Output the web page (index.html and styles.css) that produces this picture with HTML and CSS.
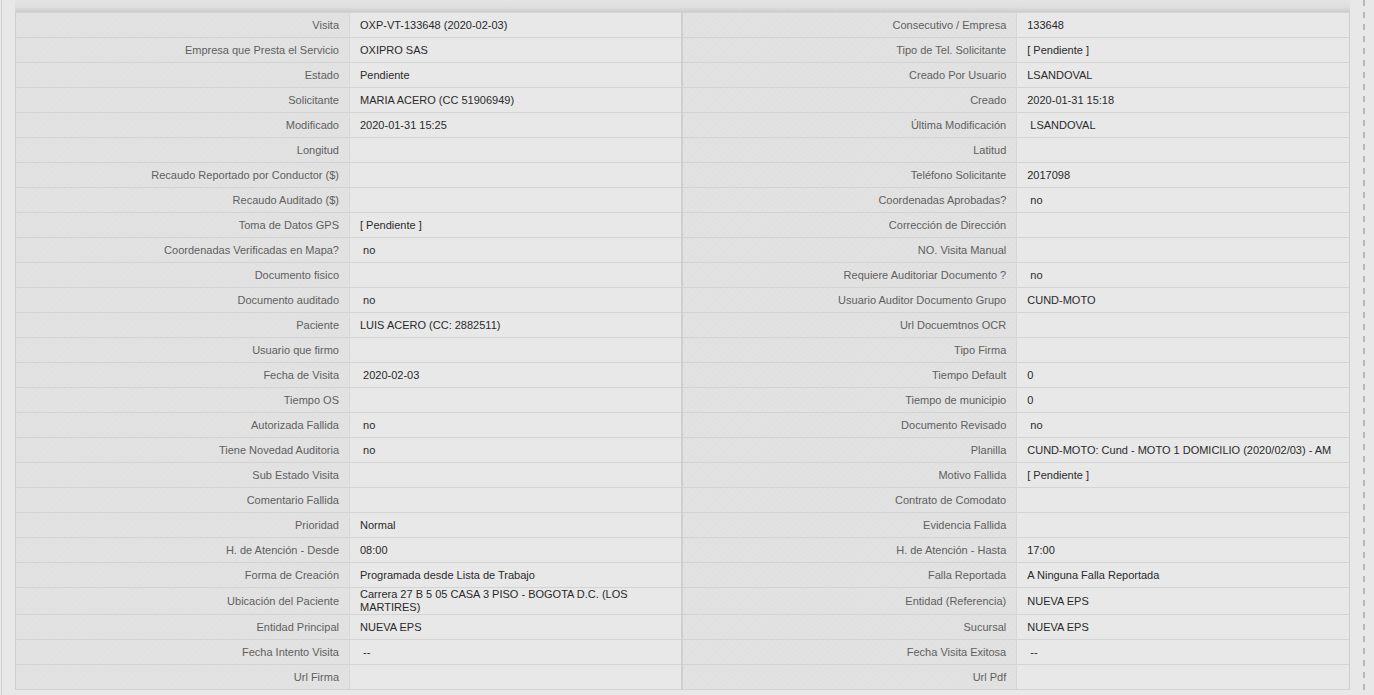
FILE: index.html
```html
<!DOCTYPE html>
<html lang="es">
<head>
    <meta charset="UTF-8">
    <title>Detalle de Visita</title>
    <link rel="stylesheet" href="styles.css">
</head>
<body>

<div class="page">
    <div class="side-line"></div>

    <div class="panel">
        <div class="panel-header"></div>
        <table class="detail-table">
            <tr><td class="lbl">Visita</td><td class="val">OXP-VT-133648 (2020-02-03)</td><td class="lbl lbl-right">Consecutivo / Empresa</td><td class="val">133648</td></tr>
            <tr><td class="lbl">Empresa que Presta el Servicio</td><td class="val">OXIPRO SAS</td><td class="lbl lbl-right">Tipo de Tel. Solicitante</td><td class="val">[ Pendiente ]</td></tr>
            <tr><td class="lbl">Estado</td><td class="val">Pendiente</td><td class="lbl lbl-right">Creado Por Usuario</td><td class="val">LSANDOVAL</td></tr>
            <tr><td class="lbl">Solicitante</td><td class="val">MARIA ACERO (CC 51906949)</td><td class="lbl lbl-right">Creado</td><td class="val">2020-01-31 15:18</td></tr>
            <tr><td class="lbl">Modificado</td><td class="val">2020-01-31 15:25</td><td class="lbl lbl-right">Última Modificación</td><td class="val">&nbsp;LSANDOVAL</td></tr>
            <tr><td class="lbl">Longitud</td><td class="val"></td><td class="lbl lbl-right">Latitud</td><td class="val"></td></tr>
            <tr><td class="lbl">Recaudo Reportado por Conductor ($)</td><td class="val"></td><td class="lbl lbl-right">Teléfono Solicitante</td><td class="val">2017098</td></tr>
            <tr><td class="lbl">Recaudo Auditado ($)</td><td class="val"></td><td class="lbl lbl-right">Coordenadas Aprobadas?</td><td class="val">&nbsp;no</td></tr>
            <tr><td class="lbl">Toma de Datos GPS</td><td class="val">[ Pendiente ]</td><td class="lbl lbl-right">Corrección de Dirección</td><td class="val"></td></tr>
            <tr><td class="lbl">Coordenadas Verificadas en Mapa?</td><td class="val">&nbsp;no</td><td class="lbl lbl-right">NO. Visita Manual</td><td class="val"></td></tr>
            <tr><td class="lbl">Documento fisico</td><td class="val"></td><td class="lbl lbl-right">Requiere Auditoriar Documento ?</td><td class="val">&nbsp;no</td></tr>
            <tr><td class="lbl">Documento auditado</td><td class="val">&nbsp;no</td><td class="lbl lbl-right">Usuario Auditor Documento Grupo</td><td class="val">CUND-MOTO</td></tr>
            <tr><td class="lbl">Paciente</td><td class="val">LUIS ACERO (CC: 2882511)</td><td class="lbl lbl-right">Url Docuemtnos OCR</td><td class="val"></td></tr>
            <tr><td class="lbl">Usuario que firmo</td><td class="val"></td><td class="lbl lbl-right">Tipo Firma</td><td class="val"></td></tr>
            <tr><td class="lbl">Fecha de Visita</td><td class="val">&nbsp;2020-02-03</td><td class="lbl lbl-right">Tiempo Default</td><td class="val">0</td></tr>
            <tr><td class="lbl">Tiempo OS</td><td class="val"></td><td class="lbl lbl-right">Tiempo de municipio</td><td class="val">0</td></tr>
            <tr><td class="lbl">Autorizada Fallida</td><td class="val">&nbsp;no</td><td class="lbl lbl-right">Documento Revisado</td><td class="val">&nbsp;no</td></tr>
            <tr><td class="lbl">Tiene Novedad Auditoria</td><td class="val">&nbsp;no</td><td class="lbl lbl-right">Planilla</td><td class="val">CUND-MOTO: Cund - MOTO 1 DOMICILIO (2020/02/03) - AM</td></tr>
            <tr><td class="lbl">Sub Estado Visita</td><td class="val"></td><td class="lbl lbl-right">Motivo Fallida</td><td class="val">[ Pendiente ]</td></tr>
            <tr><td class="lbl">Comentario Fallida</td><td class="val"></td><td class="lbl lbl-right">Contrato de Comodato</td><td class="val"></td></tr>
            <tr><td class="lbl">Prioridad</td><td class="val">Normal</td><td class="lbl lbl-right">Evidencia Fallida</td><td class="val"></td></tr>
            <tr><td class="lbl">H. de Atención - Desde</td><td class="val">08:00</td><td class="lbl lbl-right">H. de Atención - Hasta</td><td class="val">17:00</td></tr>
            <tr><td class="lbl">Forma de Creación</td><td class="val">Programada desde Lista de Trabajo</td><td class="lbl lbl-right">Falla Reportada</td><td class="val">A Ninguna Falla Reportada</td></tr>
            <tr><td class="lbl">Ubicación del Paciente</td><td class="val">Carrera 27 B 5 05 CASA 3 PISO - BOGOTA D.C. (LOS MARTIRES)</td><td class="lbl lbl-right">Entidad (Referencia)</td><td class="val">NUEVA EPS</td></tr>
            <tr><td class="lbl">Entidad Principal</td><td class="val">NUEVA EPS</td><td class="lbl lbl-right">Sucursal</td><td class="val">NUEVA EPS</td></tr>
            <tr><td class="lbl">Fecha Intento Visita</td><td class="val">&nbsp;--</td><td class="lbl lbl-right">Fecha Visita Exitosa</td><td class="val">&nbsp;--</td></tr>
            <tr><td class="lbl">Url Firma</td><td class="val"></td><td class="lbl lbl-right">Url Pdf</td><td class="val"></td></tr>
        </table>
    </div>

    <div class="dash-line"></div>
</div>

</body>
</html>
```

FILE: styles.css
```css
body {
    margin: 0;
    background-color: #e8e8e8;
    font-family: 'Liberation Sans', Arial, sans-serif;
    font-size: 11px;
    overflow: hidden;
}

.page {
    display: flex;
    height: 695px;
}

.side-line {
    width: 1px;
    margin-left: 1px;
    background-color: #d2d2d2;
}

.panel {
    width: 1335px;
    margin-left: 13px;
}

.panel-header {
    height: 12px;
    background: linear-gradient(to bottom, #e4e4e4 0%, #dedede 60%, #cccccc 100%);
}

.detail-table {
    width: 1335px;
    border-collapse: collapse;
    table-layout: fixed;
    border: 1px solid #cdcdcd;
    border-top: none;
}

.detail-table td {
    height: 24px;
    line-height: 13px;
    padding: 0 10px;
    vertical-align: middle;
    border-top: 1px solid #d3d3d3;
    border-bottom: 1px solid #d3d3d3;
    overflow: hidden;
}

.lbl {
    width: 313px;
    text-align: right;
    color: #5f5f5f;
    background: repeating-linear-gradient(135deg, #e2e2e2 0px, #e2e2e2 2px, #e0e0e0 2px, #e0e0e0 4px);
    border-right: 1px solid #d6d6d6;
}

.lbl-right {
    border-left: 2px solid #cfcfcf;
}

.val {
    color: #2a2a2a;
    background-color: #e8e8e8;
}

.dash-line {
    width: 2px;
    margin-left: 13px;
    background: repeating-linear-gradient(to bottom, #b8b8b8 0px, #b8b8b8 6px, transparent 6px, transparent 12px);
}
```
